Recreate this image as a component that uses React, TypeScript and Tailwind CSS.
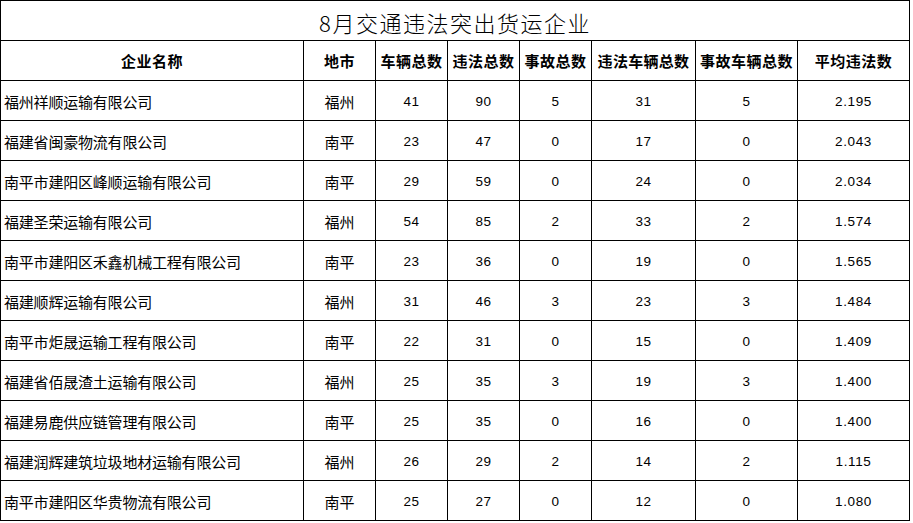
import React from "react";

const rows: string[][] = [
  ["福州祥顺运输有限公司", "福州", "41", "90", "5", "31", "5", "2.195"],
  ["福建省闽豪物流有限公司", "南平", "23", "47", "0", "17", "0", "2.043"],
  ["南平市建阳区峰顺运输有限公司", "南平", "29", "59", "0", "24", "0", "2.034"],
  ["福建圣荣运输有限公司", "福州", "54", "85", "2", "33", "2", "1.574"],
  ["南平市建阳区禾鑫机械工程有限公司", "南平", "23", "36", "0", "19", "0", "1.565"],
  ["福建顺辉运输有限公司", "福州", "31", "46", "3", "23", "3", "1.484"],
  ["南平市炬晟运输工程有限公司", "南平", "22", "31", "0", "15", "0", "1.409"],
  ["福建省佰晟渣土运输有限公司", "福州", "25", "35", "3", "19", "3", "1.400"],
  ["福建易鹿供应链管理有限公司", "南平", "25", "35", "0", "16", "0", "1.400"],
  ["福建润辉建筑垃圾地材运输有限公司", "福州", "26", "29", "2", "14", "2", "1.115"],
  ["南平市建阳区华贵物流有限公司", "南平", "25", "27", "0", "12", "0", "1.080"],
];

const headers = ["企业名称", "地市", "车辆总数", "违法总数", "事故总数", "违法车辆总数", "事故车辆总数", "平均违法数"];

const cjk = { fontFamily: '"Noto Sans CJK SC", "Noto Sans", sans-serif' };
const num = { fontFamily: '"Liberation Sans", Arial, sans-serif' };

export default function App() {
  return (
    <div className="w-[913px] h-[523px] bg-white text-black" style={cjk}>
      <div className="grid grid-cols-[302px_71px_71px_71px_71px_103px_101px_111px] auto-rows-[39px] gap-px bg-black p-px w-[910px]">
        <div className="col-span-8 bg-white flex items-center justify-center pt-[3px] text-[22px] font-light tracking-[1.5px] leading-none">
          8月交通违法突出货运企业
        </div>
        {headers.map((h, i) => (
          <div
            key={h}
            className={`bg-white flex items-center justify-center font-bold text-[15px] leading-none ${i === 5 ? "tracking-[0.3px]" : "tracking-[0.5px]"}`}
          >
            {h}
          </div>
        ))}
        {rows.map((r, ri) => (
          <React.Fragment key={ri}>
            <div className="bg-white flex items-center pl-[3px] pt-[2px] text-[15px] leading-none tracking-[-0.2px]">
              {r[0]}
            </div>
            <div className="bg-white flex items-center justify-center pt-[2px] text-[15px] leading-none">
              {r[1]}
            </div>
            {r.slice(2).map((v, ci) => (
              <div
                key={ci}
                className="bg-white flex items-center justify-center pt-[2px] text-[13.5px] leading-none tracking-[0.6px]"
                style={num}
              >
                {v}
              </div>
            ))}
          </React.Fragment>
        ))}
      </div>
    </div>
  );
}
